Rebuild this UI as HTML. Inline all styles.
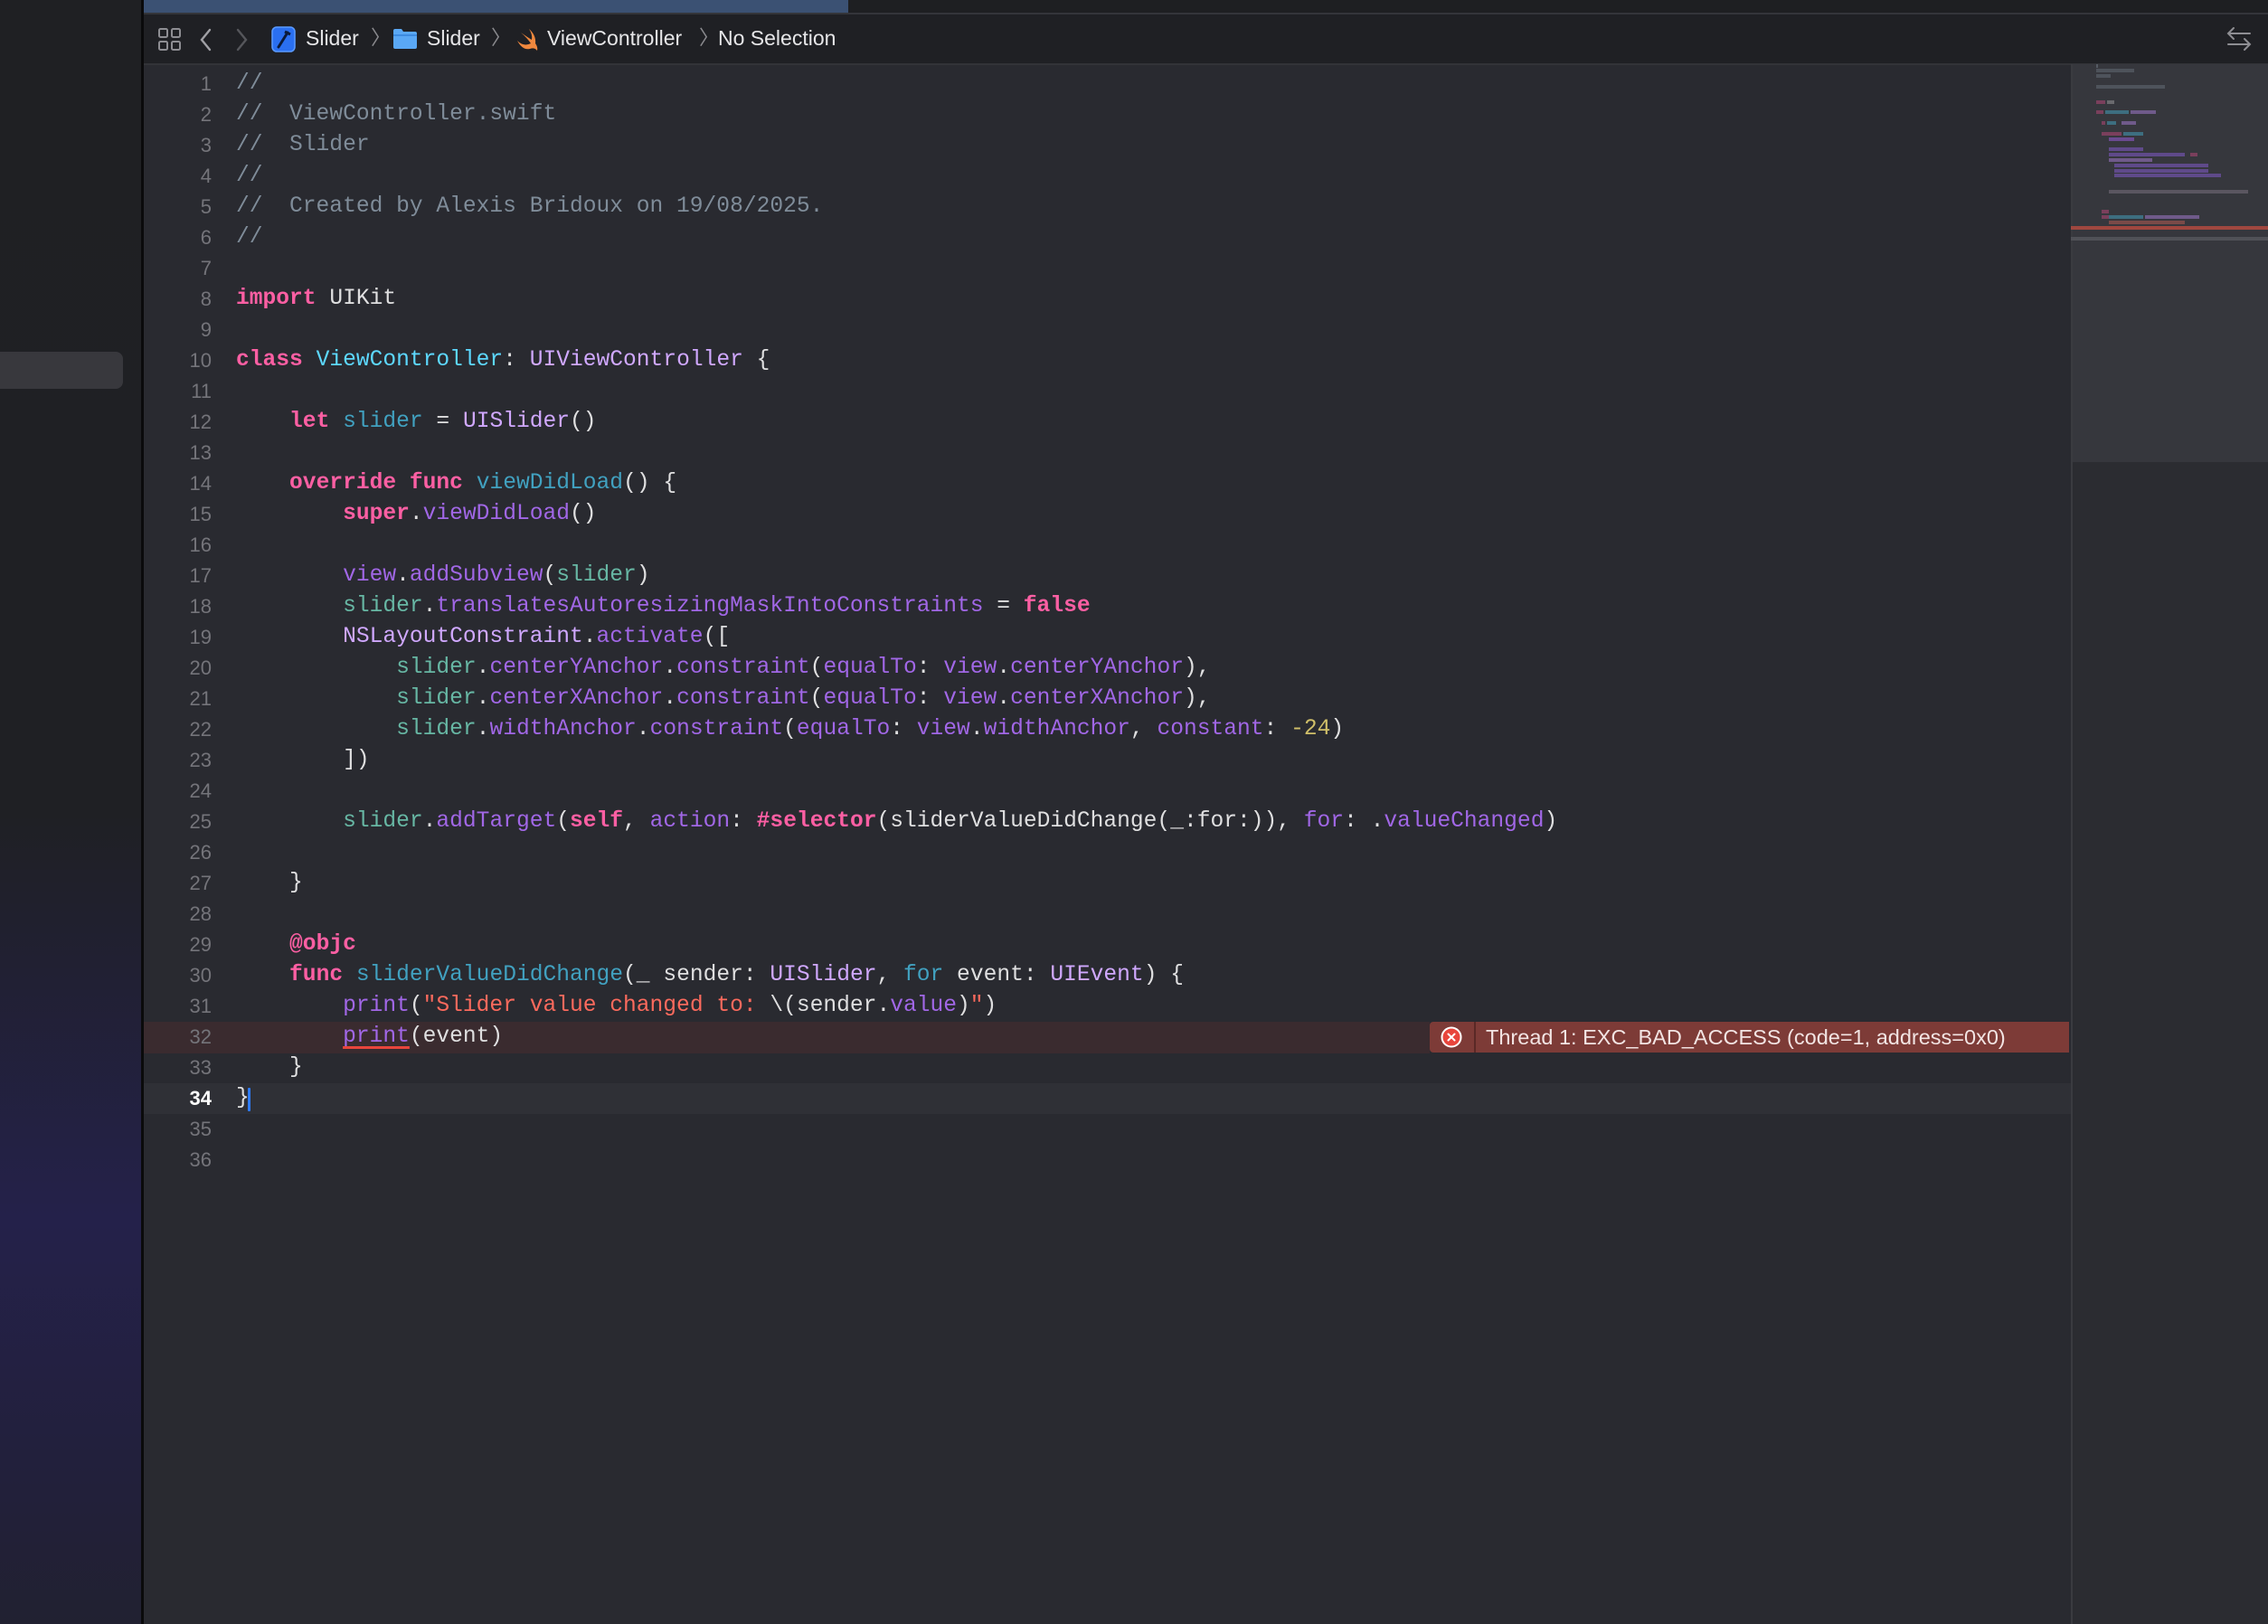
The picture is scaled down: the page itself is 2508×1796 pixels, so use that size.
<!DOCTYPE html>
<html><head><meta charset="utf-8">
<style>
html,body{margin:0;padding:0;}
body{width:2508px;height:1796px;position:relative;overflow:hidden;background:#292a30;font-family:"Liberation Sans",sans-serif;}
.abs{position:absolute;}
#side{left:0;top:0;width:156px;height:1796px;background:linear-gradient(180deg,#1f2023 0%,#1f2024 50%,#24214a 75%,#22203a 92%,#212131 100%);}
#sidesel{left:0;top:389px;width:136px;height:41px;background:#38383d;border-radius:0 8px 8px 0;}
#divider{left:156px;top:0;width:3px;height:1796px;background:#0a0a0b;}
#tabs{left:159px;top:0;width:2349px;height:14px;background:#1e1f22;border-bottom:2px solid #34353a;}
#tabsel{left:159px;top:0;width:779px;height:14px;background:#3b5173;}
#crumb{left:159px;top:16px;width:2349px;height:54px;background:#1f2024;border-bottom:2px solid #323338;}
.ct{position:absolute;top:28px;font-size:23px;color:#e6e6e8;line-height:28px;}
.chev{position:absolute;top:28px;font-size:22px;color:#8a8a8e;line-height:28px;}
.ln{position:absolute;left:160px;width:74px;text-align:right;font-size:22px;color:#74747a;height:34px;line-height:34px;}
.code{position:absolute;left:261px;font-family:"Liberation Mono",monospace;font-size:24.6px;height:34px;line-height:34px;white-space:pre;color:#dfdfe0;}
.c{color:#7f8c99}
.k{color:#fc5fa3;font-weight:bold}
.td{color:#5dd8ff}
.fd{color:#41a1c0}
.t{color:#d0a8ff}
.m{color:#a167e6}
.v{color:#67b7a4}
.s{color:#fc6a5d}
.n{color:#d0bf69}
#minimap{left:2290px;top:71px;width:218px;height:1725px;background:#2b2c31;border-left:2px solid #3a3b40;}
#minitop{left:2292px;top:71px;width:216px;height:440px;background:#36373d;}
.mb{position:absolute;height:4px;}
#shift{position:absolute;left:0;top:2px;width:2508px;height:1794px;}
</style></head><body>
<div id="side" class="abs"></div>
<div id="sidesel" class="abs"></div>
<div id="divider" class="abs"></div>
<div id="tabs" class="abs"></div>
<div id="tabsel" class="abs"></div>
<div id="crumb" class="abs"></div>

<svg class="abs" style="left:174px;top:30px" width="28" height="28" viewBox="0 0 28 28" fill="none" stroke="#8e8e93" stroke-width="2"><rect x="2" y="2" width="9" height="9" rx="1.5"/><rect x="16" y="2" width="9" height="9" rx="1.5"/><rect x="2" y="16" width="9" height="9" rx="1.5"/><rect x="16" y="16" width="9" height="9" rx="1.5"/></svg>
<svg class="abs" style="left:218px;top:30px" width="20" height="28" viewBox="0 0 20 28" fill="none" stroke="#a0a0a5" stroke-width="2.4" stroke-linecap="round"><path d="M14 3 L5 14 L14 25"/></svg>
<svg class="abs" style="left:257px;top:30px" width="20" height="28" viewBox="0 0 20 28" fill="none" stroke="#55565b" stroke-width="2.4" stroke-linecap="round"><path d="M6 3 L15 14 L6 25"/></svg>
<svg class="abs" style="left:300px;top:29px" width="28" height="30" viewBox="0 0 28 30"><rect x="1" y="1" width="25" height="27" rx="5" fill="#2a6ff0" stroke="#5b9bff" stroke-width="1.5"/><path d="M8 23 L18 7" stroke="#0b1a3a" stroke-width="3" stroke-linecap="round"/><path d="M15 6 L21 9" stroke="#0b1a3a" stroke-width="3"/></svg>
<div class="ct" style="left:338px">Slider</div>
<div class="chev" style="left:410px">〉</div>
<svg class="abs" style="left:434px;top:31px" width="28" height="24" viewBox="0 0 28 24"><path d="M1 3 Q1 1 3 1 L10 1 L12 4 L25 4 Q27 4 27 6 L27 21 Q27 23 25 23 L3 23 Q1 23 1 21 Z" fill="#5aa8f5"/><rect x="1" y="7" width="26" height="2" fill="#3d8be0"/></svg>
<div class="ct" style="left:472px">Slider</div>
<div class="chev" style="left:543px">〉</div>
<svg class="abs" style="left:569px;top:30px" width="28" height="28" viewBox="0 0 28 28"><path d="M3 15 Q10 22 18 18 Q14 12 7 6 Q14 11 19 14 Q20 8 16 2 Q24 9 23 18 Q26 22 25 26 Q22 22 17 24 Q9 26 3 15 Z" fill="#f0883e"/></svg>
<div class="ct" style="left:605px">ViewController</div>
<div class="chev" style="left:773px">〉</div>
<div class="ct" style="left:794px">No Selection</div>
<svg class="abs" style="left:2460px;top:28px" width="32" height="30" viewBox="0 0 32 30" fill="none" stroke="#8e8e93" stroke-width="2" stroke-linecap="round"><path d="M28 9 L4 9 M10 3 L4 9 L10 15"/><path d="M4 21 L28 21 M22 15 L28 21 L22 27"/></svg>

<div id="minimap" class="abs"></div>
<div id="minitop" class="abs"></div>
<div class="mb" style="left:2318px;top:71px;width:2px;background:#555a63"></div>
<div class="mb" style="left:2318px;top:76px;width:42px;background:#4e535b"></div>
<div class="mb" style="left:2318px;top:82px;width:16px;background:#4e535b"></div>
<div class="mb" style="left:2318px;top:94px;width:76px;background:#4e535b"></div>
<div class="mb" style="left:2318px;top:111px;width:10px;background:#7a3f5c"></div>
<div class="mb" style="left:2330px;top:111px;width:8px;background:#6a6a6e"></div>
<div class="mb" style="left:2318px;top:122px;width:8px;background:#7a3f5c"></div>
<div class="mb" style="left:2328px;top:122px;width:26px;background:#3d6e80"></div>
<div class="mb" style="left:2356px;top:122px;width:28px;background:#6f5a8a"></div>
<div class="mb" style="left:2324px;top:134px;width:4px;background:#7a3f5c"></div>
<div class="mb" style="left:2330px;top:134px;width:10px;background:#3d6e80"></div>
<div class="mb" style="left:2346px;top:134px;width:16px;background:#6f5a8a"></div>
<div class="mb" style="left:2324px;top:146px;width:22px;background:#7a3f5c"></div>
<div class="mb" style="left:2348px;top:146px;width:22px;background:#3d6e80"></div>
<div class="mb" style="left:2332px;top:152px;width:28px;background:#6a4a90"></div>
<div class="mb" style="left:2332px;top:163px;width:38px;background:#5f4a8a"></div>
<div class="mb" style="left:2332px;top:169px;width:84px;background:#5f4a8a"></div>
<div class="mb" style="left:2422px;top:169px;width:8px;background:#7a3f5c"></div>
<div class="mb" style="left:2332px;top:175px;width:48px;background:#6f5a8a"></div>
<div class="mb" style="left:2338px;top:181px;width:104px;background:#5f4a8a"></div>
<div class="mb" style="left:2338px;top:187px;width:104px;background:#5f4a8a"></div>
<div class="mb" style="left:2338px;top:192px;width:118px;background:#5f4a8a"></div>
<div class="mb" style="left:2332px;top:210px;width:154px;background:#5a5660"></div>
<div class="mb" style="left:2324px;top:232px;width:8px;background:#7a3f5c"></div>
<div class="mb" style="left:2324px;top:238px;width:8px;background:#7a3f5c"></div>
<div class="mb" style="left:2332px;top:238px;width:38px;background:#3d6e80"></div>
<div class="mb" style="left:2372px;top:238px;width:60px;background:#6f5a8a"></div>
<div class="mb" style="left:2332px;top:244px;width:84px;background:#7a4a48"></div>
<div class="mb" style="left:2290px;top:250px;width:218px;background:#a0473f"></div>
<div class="mb" style="left:2290px;top:262px;width:218px;background:#505157"></div>

<div id="shift">
<div class="abs" style="left:159px;top:1128px;width:1422px;height:35px;background:#3a2b2f"></div>
<div class="abs" style="left:159px;top:1196px;width:2131px;height:34px;background:#2f3036"></div>
<div class="abs" style="left:1581px;top:1128px;width:707px;height:34px;background:#7d3b37;border-radius:4px 0 0 4px"></div>
<div class="abs" style="left:1630px;top:1128px;width:2px;height:34px;background:#5a2826"></div>
<svg class="abs" style="left:1593px;top:1133px" width="24" height="24" viewBox="0 0 24 24"><circle cx="12" cy="12" r="10.5" fill="#e8453c" stroke="#fff" stroke-width="2"/><path d="M8.5 8.5 L15.5 15.5 M15.5 8.5 L8.5 15.5" stroke="#fff" stroke-width="2" stroke-linecap="round"/></svg>
<div class="abs" style="left:1643px;top:1130px;font-size:23.5px;line-height:30px;color:#f2e4e3">Thread 1: EXC_BAD_ACCESS (code=1, address=0x0)</div>
<div class="abs" style="left:274px;top:1201px;width:3px;height:26px;background:#2f7bf5;border-radius:1px"></div>

<div class="ln" style="top:74px">1</div><div class="ln" style="top:108px">2</div><div class="ln" style="top:142px">3</div><div class="ln" style="top:176px">4</div><div class="ln" style="top:210px">5</div><div class="ln" style="top:244px">6</div><div class="ln" style="top:278px">7</div><div class="ln" style="top:312px">8</div><div class="ln" style="top:346px">9</div><div class="ln" style="top:380px">10</div><div class="ln" style="top:414px">11</div><div class="ln" style="top:448px">12</div><div class="ln" style="top:482px">13</div><div class="ln" style="top:516px">14</div><div class="ln" style="top:550px">15</div><div class="ln" style="top:584px">16</div><div class="ln" style="top:618px">17</div><div class="ln" style="top:652px">18</div><div class="ln" style="top:686px">19</div><div class="ln" style="top:720px">20</div><div class="ln" style="top:754px">21</div><div class="ln" style="top:788px">22</div><div class="ln" style="top:822px">23</div><div class="ln" style="top:856px">24</div><div class="ln" style="top:890px">25</div><div class="ln" style="top:924px">26</div><div class="ln" style="top:958px">27</div><div class="ln" style="top:992px">28</div><div class="ln" style="top:1026px">29</div><div class="ln" style="top:1060px">30</div><div class="ln" style="top:1094px">31</div><div class="ln" style="top:1128px">32</div><div class="ln" style="top:1162px">33</div><div class="ln" style="top:1196px;color:#fff;font-weight:bold">34</div><div class="ln" style="top:1230px">35</div><div class="ln" style="top:1264px">36</div>

<div class="code c" style="top:74px">//</div>
<div class="code c" style="top:108px">//  ViewController.swift</div>
<div class="code c" style="top:142px">//  Slider</div>
<div class="code c" style="top:176px">//</div>
<div class="code c" style="top:210px">//  Created by Alexis Bridoux on 19/08/2025.</div>
<div class="code c" style="top:244px">//</div>
<div class="code" style="top:312px"><span class="k">import</span> UIKit</div>
<div class="code" style="top:380px"><span class="k">class</span> <span class="td">ViewController</span>: <span class="t">UIViewController</span> {</div>
<div class="code" style="top:448px">    <span class="k">let</span> <span class="fd">slider</span> = <span class="t">UISlider</span>()</div>
<div class="code" style="top:516px">    <span class="k">override</span> <span class="k">func</span> <span class="fd">viewDidLoad</span>() {</div>
<div class="code" style="top:550px">        <span class="k">super</span>.<span class="m">viewDidLoad</span>()</div>
<div class="code" style="top:618px">        <span class="m">view</span>.<span class="m">addSubview</span>(<span class="v">slider</span>)</div>
<div class="code" style="top:652px">        <span class="v">slider</span>.<span class="m">translatesAutoresizingMaskIntoConstraints</span> = <span class="k">false</span></div>
<div class="code" style="top:686px">        <span class="t">NSLayoutConstraint</span>.<span class="m">activate</span>([</div>
<div class="code" style="top:720px">            <span class="v">slider</span>.<span class="m">centerYAnchor</span>.<span class="m">constraint</span>(<span class="m">equalTo</span>: <span class="m">view</span>.<span class="m">centerYAnchor</span>),</div>
<div class="code" style="top:754px">            <span class="v">slider</span>.<span class="m">centerXAnchor</span>.<span class="m">constraint</span>(<span class="m">equalTo</span>: <span class="m">view</span>.<span class="m">centerXAnchor</span>),</div>
<div class="code" style="top:788px">            <span class="v">slider</span>.<span class="m">widthAnchor</span>.<span class="m">constraint</span>(<span class="m">equalTo</span>: <span class="m">view</span>.<span class="m">widthAnchor</span>, <span class="m">constant</span>: <span class="n">-24</span>)</div>
<div class="code" style="top:822px">        ])</div>
<div class="code" style="top:890px">        <span class="v">slider</span>.<span class="m">addTarget</span>(<span class="k">self</span>, <span class="m">action</span>: <span class="k">#selector</span>(sliderValueDidChange(_:for:)), <span class="m">for</span>: .<span class="m">valueChanged</span>)</div>
<div class="code" style="top:958px">    }</div>
<div class="code" style="top:1026px">    <span class="k">@objc</span></div>
<div class="code" style="top:1060px">    <span class="k">func</span> <span class="fd">sliderValueDidChange</span>(_ sender: <span class="t">UISlider</span>, <span class="fd">for</span> event: <span class="t">UIEvent</span>) {</div>
<div class="code" style="top:1094px">        <span class="m">print</span>(<span class="s">"Slider value changed to: </span>\(sender.<span class="m">value</span>)<span class="s">"</span>)</div>
<div class="code" style="top:1128px">        <span class="m" style="text-decoration:underline;text-decoration-color:#e8453c;text-decoration-thickness:3px;text-underline-offset:5px">print</span>(event)</div>
<div class="code" style="top:1162px">    }</div>
<div class="code" style="top:1196px">}</div>
</div>
</body></html>
